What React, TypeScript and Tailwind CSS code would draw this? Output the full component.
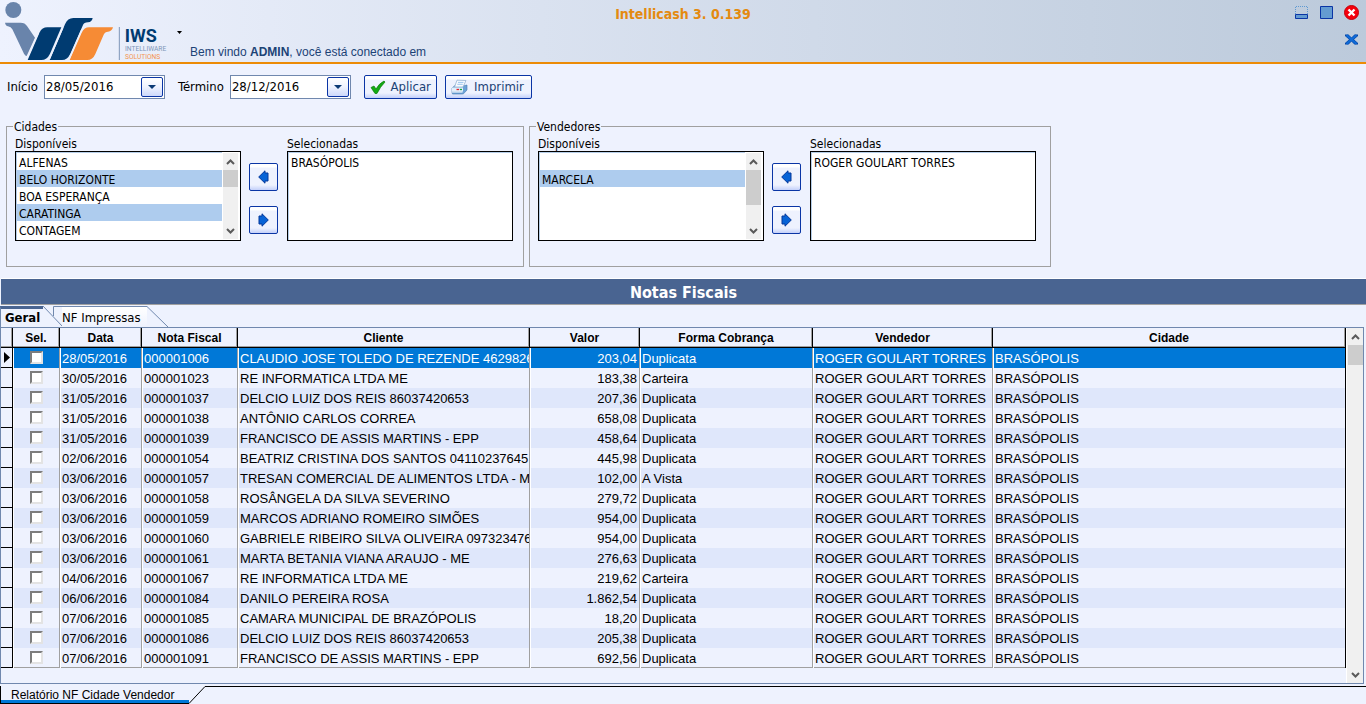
import { useState } from "react";

const TAHOMA = "font-['DejaVu_Sans_Condensed','DejaVu_Sans',sans-serif]";
const ARIAL = "font-['Liberation_Sans',Arial,sans-serif]";

const rows: string[][] = [
  ["28/05/2016", "000001006", "CLAUDIO JOSE TOLEDO DE REZENDE 4629826", "203,04", "Duplicata"],
  ["30/05/2016", "000001023", "RE INFORMATICA LTDA ME", "183,38", "Carteira"],
  ["31/05/2016", "000001037", "DELCIO LUIZ DOS REIS 86037420653", "207,36", "Duplicata"],
  ["31/05/2016", "000001038", "ANTÔNIO CARLOS CORREA", "658,08", "Duplicata"],
  ["31/05/2016", "000001039", "FRANCISCO DE ASSIS MARTINS - EPP", "458,64", "Duplicata"],
  ["02/06/2016", "000001054", "BEATRIZ CRISTINA DOS SANTOS 04110237645", "445,98", "Duplicata"],
  ["03/06/2016", "000001057", "TRESAN COMERCIAL DE ALIMENTOS LTDA - ME", "102,00", "A Vista"],
  ["03/06/2016", "000001058", "ROSÂNGELA DA SILVA SEVERINO", "279,72", "Duplicata"],
  ["03/06/2016", "000001059", "MARCOS ADRIANO ROMEIRO SIMÕES", "954,00", "Duplicata"],
  ["03/06/2016", "000001060", "GABRIELE RIBEIRO SILVA OLIVEIRA 097323476", "954,00", "Duplicata"],
  ["03/06/2016", "000001061", "MARTA BETANIA VIANA ARAUJO - ME", "276,63", "Duplicata"],
  ["04/06/2016", "000001067", "RE INFORMATICA LTDA ME", "219,62", "Carteira"],
  ["06/06/2016", "000001084", "DANILO PEREIRA ROSA", "1.862,54", "Duplicata"],
  ["07/06/2016", "000001085", "CAMARA MUNICIPAL DE BRAZÓPOLIS", "18,20", "Duplicata"],
  ["07/06/2016", "000001086", "DELCIO LUIZ DOS REIS 86037420653", "205,38", "Duplicata"],
  ["07/06/2016", "000001091", "FRANCISCO DE ASSIS MARTINS - EPP", "692,56", "Duplicata"],
];

const headers = ["Data", "Nota Fiscal", "Cliente", "Valor", "Forma Cobrança", "Vendedor", "Cidade"];

function Logo() {
  return (
    <svg viewBox="0 0 510 186" className="h-[62px] w-[170px] shrink-0" role="img" aria-label="IWS Intelliware Solutions">
      <circle cx="40" cy="30" r="24" fill="#6984ab" />
      <path d="M15 68H62Q75 68 81 78L105 113L80 168Q76 168 72 161L37 88Q33 80 24 79Q17 78 15 68Z" fill="#6984ab" />
      <path d="M83 180L119 97Q126 82 142 82H184L150 161Q141 180 124 180Z" fill="#003b71" />
      <path d="M149 180L195 73Q203 54 220 54H278Q276 66 264 67Q252 67 248 77L211 161Q202 180 186 180Z" fill="#003b71" />
      <path d="M209 180L245 98Q253 82 267 82H339Q336 94 324 95Q315 95 311 104L286 162Q278 180 262 180Z" fill="#f68b35" />
      <path d="M80 178L116 96M148 178L189 82M207 178L245 90" stroke="#eef2fe" strokeWidth="4" />
      <path d="M358 81V180" stroke="#6984ab" strokeWidth="2.5" />
      <text x="374" y="125" fontSize="54" fontWeight="700" fill="#003b71" fontFamily="Roboto,sans-serif">IWS</text>
      <text x="375" y="153" fontSize="20" fill="#7e96b8" fontFamily="Roboto,sans-serif">INTELLIWARE</text>
      <text x="375" y="178" fontSize="20" fill="#f49550" fontFamily="Roboto,sans-serif">SOLUTIONS</text>
    </svg>
  );
}

function Chevron({ up = false }: { up?: boolean }) {
  return (
    <svg viewBox="0 0 15 17" className="h-[17px] w-[15px] shrink-0" aria-hidden="true">
      <path d={up ? "M4 11L7.5 7.5L11 11" : "M4 7L7.5 10.5L11 7"} fill="none" stroke="#5a5a5a" strokeWidth="2" />
    </svg>
  );
}

function DateField({ id, label, value }: { id: string; label: string; value: string }) {
  const [v, setV] = useState(value);
  return (
    <div className="flex items-center gap-[6px]">
      <label htmlFor={id}>{label}</label>
      <div className="flex h-6 w-[121px] items-center border border-[#7088ae] bg-white pr-px">
        <input id={id} value={v} onChange={(e) => setV(e.target.value)} className="h-5 w-0 flex-1 bg-white pb-[2px] pl-px outline-none" />
        <button aria-label={`Abrir calendário ${label}`} className="flex h-5 w-[22px] items-center justify-center rounded-[2px] border border-[#0a35a5] bg-linear-to-b from-white via-[#eef2fe] to-[#cdd9fb]">
          <svg viewBox="0 0 8 4" className="h-1 w-2" aria-hidden="true">
            <path d="M0 0H8L4 4Z" fill="#0b3a74" />
          </svg>
        </button>
      </div>
    </div>
  );
}

function ListBox({ id, label, items, selected = [], thumb = "" }: { id: string; label: string; items: string[]; selected?: string[]; thumb?: string }) {
  return (
    <div className="w-[226px]">
      <label htmlFor={id} className="block h-[13px] leading-[13px]">{label}</label>
      <div className="flex h-[90px] border border-black bg-white">
        <select
          id={id}
          multiple
          size={5}
          defaultValue={selected}
          className="h-[88px] w-0 flex-1 appearance-none overflow-hidden border-t border-l border-[#b5cde8] bg-white p-0 outline-none"
        >
          {items.map((t, i) => (
            <option key={i} value={t} className="h-[17px] min-h-[17px] p-0 pt-[3px] pl-[2px] leading-[13px] text-black checked:bg-[linear-gradient(#aeccee,#aeccee)] checked:text-black">
              {t}
            </option>
          ))}
        </select>
        {thumb && (
          <div className="my-px mr-[2px] ml-px flex w-[15px] flex-col bg-[#f0f0f0]">
            <Chevron up />
            <div className="flex-1">
              <div className={`${thumb} bg-[#cdcdcd]`} />
            </div>
            <Chevron />
          </div>
        )}
      </div>
    </div>
  );
}

function MoveButton({ dir, label }: { dir: "left" | "right"; label: string }) {
  return (
    <button aria-label={label} className="flex h-7 w-[29px] items-center justify-center rounded-[2px] border border-[#0a35a5] bg-[linear-gradient(#ffffff_0_3px,#eef2fe_4px_21px,#c3d0fa)]">
      <svg viewBox="0 0 11 14" className="h-[14px] w-[11px]" aria-hidden="true">
        <path
          d={dir === "left" ? "M0.7 7L7 .8V3H10V11H7V13.2Z" : "M10.3 7L4 .8V3H1V11H4V13.2Z"}
          fill="#0763d6"
          stroke="#04389b"
        />
      </svg>
    </button>
  );
}

function Picker({ id, title, width, items, selected, chosen, thumb }: { id: string; title: string; width: string; items: string[]; selected: string[]; chosen: string; thumb: string }) {
  return (
    <fieldset className={`${width} border border-[#a0a0a0] px-2 pt-[5px] pb-[25px]`}>
      <legend className="-ml-[2px] h-[13px] px-px leading-[15px]">{title}</legend>
      <div className="flex gap-2">
        <ListBox id={`${id}-disponiveis`} label="Disponíveis" items={items} selected={selected} thumb={thumb} />
        <div className="flex flex-col gap-[15px] pt-[25px] pr-px">
          <MoveButton dir="left" label={`Remover de ${title}`} />
          <MoveButton dir="right" label={`Adicionar a ${title}`} />
        </div>
        <ListBox id={`${id}-selecionadas`} label="Selecionadas" items={[chosen]} />
      </div>
    </fieldset>
  );
}

const toolButton =
  "flex h-6 items-center rounded-[2px] border border-[#0a35a5] bg-[linear-gradient(#ffffff_0_3px,#eef2fe_4px_17px,#c3d0fa)] text-[#1c4376]";

export default function App() {
  const [checked, setChecked] = useState<boolean[]>(rows.map(() => false));
  const [current, setCurrent] = useState(0);

  return (
    <div className={`${TAHOMA} flex min-h-screen flex-col bg-[#eef2fe] text-[12px] leading-[14px] text-black`}>
      <header className="grid h-16 grid-cols-[1fr_auto_1fr] border-b-2 border-[#ec8b06] bg-linear-to-r from-[#eef2fe] to-[#bccadb]">
        <div className="flex">
          <Logo />
          <svg viewBox="0 0 5 3" className="mt-[31px] ml-[7px] h-[3px] w-[5px]" aria-hidden="true">
            <path d="M0 0H5L2.5 3Z" fill="#000" />
          </svg>
          <p className={`${ARIAL} mt-[45px] ml-2 text-[12px] whitespace-nowrap text-[#1c4376]`}>
            Bem vindo <b>ADMIN</b>, você está conectado em
          </p>
        </div>
        <h1 className="pt-1 text-[14px] leading-5 font-bold text-[#e48a10]">Intellicash 3. 0.139</h1>
        <div className="flex flex-col items-end gap-[14px] pt-[5px] pr-[7px]">
          <div className="flex gap-[11px]">
            <button aria-label="Minimizar">
              <svg viewBox="0 0 14 15" className="h-[15px] w-[14px]">
                <path d="M1.5 9V1.5H13.5V9" fill="none" stroke="#5f9ad2" strokeDasharray="1 1" />
                <path d="M1.5 9.5H13.5V13.5H1.5Z" fill="#649bd1" stroke="#0a35a5" />
              </svg>
            </button>
            <button aria-label="Maximizar">
              <svg viewBox="0 0 14 15" className="h-[15px] w-[14px]">
                <path d="M1.5 1.5H13.5V13.5H1.5Z" fill="#649bd1" stroke="#0a35a5" />
              </svg>
            </button>
            <button aria-label="Sair">
              <svg viewBox="0 0 15 15" className="h-[15px] w-[15px]">
                <circle cx="7.5" cy="7.5" r="7" fill="#f5000c" stroke="#c4000a" />
                <path d="M4.5 4.5L10.5 10.5M10.5 4.5L4.5 10.5" stroke="#fff" strokeWidth="2.4" />
              </svg>
            </button>
          </div>
          <button aria-label="Fechar janela">
            <svg viewBox="0 0 15 11" className="h-[11px] w-[15px]">
              <path d="M1 .5H4.5L7.5 3.5L10.5 .5H14V2L10 5.5L14 9V10.5H10.5L7.5 7.5L4.5 10.5H1V9L5 5.5L1 2Z" fill="#0745a5" />
              <path d="M2.5 1.2L12.5 9.8M12.5 1.2L2.5 9.8" stroke="#0f6ad6" strokeWidth="2.2" />
            </svg>
          </button>
        </div>
      </header>

      <form className="flex items-center gap-[13px] pt-[11px] pl-[7px] text-[13px]" onSubmit={(e) => e.preventDefault()}>
        <DateField id="inicio" label="Início" value="28/05/2016" />
        <DateField id="termino" label="Término" value="28/12/2016" />
        <div className="flex gap-2">
          <button type="submit" className={`${toolButton} w-[73px] justify-between pr-[5px] pl-[5px]`}>
            <svg viewBox="0 0 16 16" className="h-4 w-4 shrink-0" aria-hidden="true">
              <path d="M1 8.5L4 7L6 10Q9 4.5 14 2L15 3Q10 8 7 14.5H5Z" fill="#12ab12" stroke="#087a08" strokeWidth=".7" />
            </svg>
            Aplicar
          </button>
          <button type="button" className={`${toolButton} w-[87px] justify-between pr-[7px] pl-[5px]`}>
            <svg viewBox="0 0 17 16" className="h-4 w-[17px] shrink-0" aria-hidden="true">
              <path d="M4 6.5L12 7L16 6V11L12.5 14.8L11 15H1.5L1 13.5V9Z" fill="#6ba2d6" stroke="#4579b0" strokeWidth=".6" />
              <path d="M3.5 8L6 1.2L15 1.5L12 8Z" fill="#f8fbff" stroke="#86a9cc" strokeWidth=".7" />
              <path d="M7 3.4H12.5M6.3 5.3H11.7" stroke="#8fbfeb" strokeWidth=".9" />
              <path d="M1 8.5H12V12.5H1Z" fill="#e3effb" />
              <path d="M1 13H11.5" stroke="#ffffff" strokeWidth="1" />
              <path d="M5.5 10.5H8" stroke="#e8202c" strokeWidth="1.3" />
              <path d="M8.8 10.5H11" stroke="#18a435" strokeWidth="1.3" />
            </svg>
            Imprimir
          </button>
        </div>
      </form>

      <section className="flex flex-wrap gap-[5px] pt-[21px] pl-[6px]">
        <Picker
          id="cidades"
          title="Cidades"
          width="w-[518px]"
          items={["ALFENAS", "BELO HORIZONTE", "BOA ESPERANÇA", "CARATINGA", "CONTAGEM"]}
          selected={["BELO HORIZONTE", "CARATINGA"]}
          chosen="BRASÓPOLIS"
          thumb="h-[17px]"
        />
        <Picker
          id="vendedores"
          title="Vendedores"
          width="w-[522px]"
          items={["\u00a0", "MARCELA"]}
          selected={["MARCELA"]}
          chosen="ROGER GOULART TORRES"
          thumb="h-[35px]"
        />
      </section>

      <h2 className="mt-[11px] ml-px h-[27px] border-t border-b border-t-white border-b-[#a0a0a0] bg-[#496491] text-center text-[16px] leading-[27px] font-bold text-white">
        Notas Fiscais
      </h2>

      <div role="tablist" className="flex h-[22px] pt-px text-[13px]">
        <button role="tab" aria-selected="true" className="h-[21px] w-[43px] border-t-[3px] border-l border-t-[#496491] border-l-[#7088ae] pl-1 text-left font-bold">
          Geral
        </button>
        <svg viewBox="0 0 19 21" className="h-[21px] w-[19px]" aria-hidden="true">
          <path d="M0 0L20 21" stroke="#7088ae" fill="none" />
          <path d="M10.5 10V.5H20" stroke="#7088ae" fill="none" />
        </svg>
        <button role="tab" aria-selected="false" className="h-[21px] w-[85px] border-t border-[#7088ae] bg-linear-to-b from-white to-[#eef2fe] pt-px text-left">
          NF Impressas
        </button>
        <svg viewBox="0 0 21 21" className="h-[21px] w-[21px]" aria-hidden="true">
          <path d="M0 .5L21 21" stroke="#7088ae" fill="none" />
        </svg>
      </div>

      <div className={`${ARIAL} mr-[2px] flex flex-1 border border-[#7088ae]`}>
        <div className="min-w-0 flex-1">
          <table className="w-full table-fixed border-separate border-spacing-0">
            <colgroup>
              <col className="w-3" />
              <col className="w-[47px]" />
              <col className="w-[82px]" />
              <col className="w-[96px]" />
              <col className="w-[292px]" />
              <col className="w-[110px]" />
              <col className="w-[173px]" />
              <col className="w-[180px]" />
              <col />
            </colgroup>
            <thead>
              <tr>
                {["", "Sel.", ...headers].map((h, i) => (
                  <th key={i} className="h-5 border-r border-b border-black p-0 text-[12px] leading-[18px] font-bold shadow-[inset_-1px_-1px_0_#a0a0a0]">
                    {h}
                  </th>
                ))}
              </tr>
            </thead>
            <tbody className="text-[13px] leading-[19px]">
              {rows.map((r, i) => {
                const on = i === current;
                const color = on ? "bg-[#0078d7] text-white" : i % 2 ? "bg-[#eef2fe]" : "bg-[#dfe7fb]";
                const edge = i === rows.length - 1 ? "shadow-[inset_0_-1px_0_#a0a0a0]" : "";
                const box = `h-5 overflow-hidden border-r border-l border-l-white border-r-[#a0a0a0] p-0 whitespace-nowrap ${edge}`;
                const cell = `${box} pl-px`;
                return (
                  <tr key={r[1]} className={color} onClick={() => setCurrent(i)}>
                    <td className="h-5 border-r border-b border-black bg-[#eef2fe] p-0">
                      {on && (
                        <svg viewBox="0 0 11 11" className="h-[11px] w-[11px]" aria-hidden="true">
                          <path d="M3 0L9 5.5L3 11Z" fill="#000" />
                        </svg>
                      )}
                    </td>
                    <td className={`${box} pr-px`}>
                      <input
                        type="checkbox"
                        aria-label={`Selecionar nota ${r[1]}`}
                        checked={checked[i]}
                        onChange={() => setChecked(checked.map((c, k) => (k === i ? !c : c)))}
                        className="mx-auto mb-[2px] block h-[13px] w-[13px] appearance-none border-2 border-t-[#7d7d7d] border-r-[#e3e3e3] border-b-[#e3e3e3] border-l-[#7d7d7d] bg-white checked:bg-black"
                      />
                    </td>
                    <td className={cell}>{r[0]}</td>
                    <td className={cell}>{r[1]}</td>
                    <td className={cell}>{r[2]}</td>
                    <td className={`${cell} pr-[2px] text-right`}>{r[3]}</td>
                    <td className={cell}>{r[4]}</td>
                    <td className={cell}>ROGER GOULART TORRES</td>
                    <td className={`h-5 border-r border-l border-r-black border-l-white p-0 pl-px ${edge}`}>BRASÓPOLIS</td>
                  </tr>
                );
              })}
            </tbody>
          </table>
        </div>
        <div className="flex w-[17px] flex-col items-center border-l border-white bg-[#f0f0f0]">
          <Chevron up />
          <div className="w-[15px] flex-1">
            <div className="h-5 bg-[#cdcdcd]" />
          </div>
          <Chevron />
        </div>
      </div>

      <footer className={`${ARIAL} mt-[2px] flex h-[18px]`}>
        <button className="h-[18px] w-[189px] border-b border-l border-black pl-[10px] text-left text-[12px] leading-[14px] whitespace-nowrap shadow-[inset_0_-3px_0_#0078d7]">
          Relatório NF Cidade Vendedor
        </button>
        <svg viewBox="0 0 16 18" className="h-[18px] w-4" aria-hidden="true">
          <path d="M0 17.5L16 .5" stroke="#000" fill="none" />
        </svg>
        <div className="flex-1 border-t border-black" />
      </footer>
    </div>
  );
}
